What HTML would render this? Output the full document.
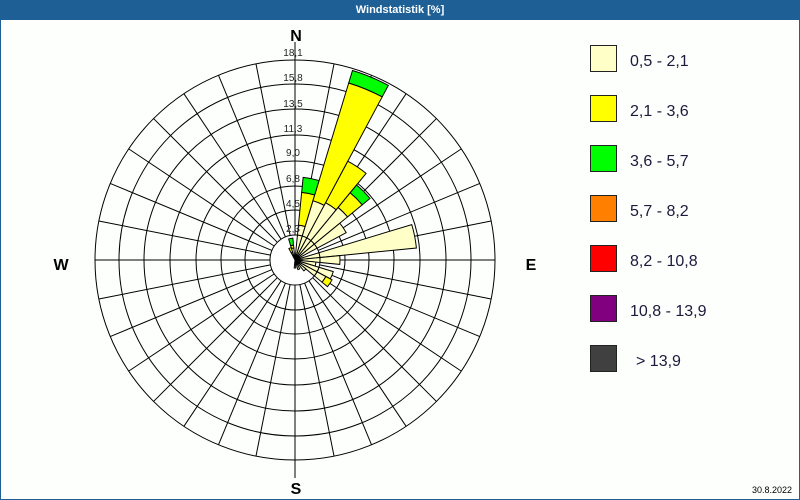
<!DOCTYPE html>
<html><head><meta charset="utf-8"><style>
html,body{margin:0;padding:0;background:#fff}
#t{position:absolute;left:0;top:0;width:800px;height:20px;background:#1e6096;color:#fff;font:bold 11px "Liberation Sans",sans-serif;text-align:center;line-height:20px;z-index:2}
svg{position:absolute;left:0;top:0}
</style></head><body>
<div id="t">Windstatistik [%]</div>
<svg width="800" height="500" viewBox="0 0 800 500" id="s">
<rect x="0.5" y="19.5" width="799" height="480" fill="#fdfffd" stroke="#1e6096"/>
<g id="grid" fill="none" stroke="#000" stroke-width="1"></g>
<g id="bars" stroke="#000" stroke-width="1"></g>
<circle cx="295" cy="260" r="25" fill="#fff" stroke="#000"/>
<g id="bars2" stroke="#000" stroke-width="1"></g>
<g font-family="Liberation Sans,sans-serif" font-size="10" fill="#222" text-anchor="middle">
<text x="293" y="56">18,1</text><text x="293" y="81">15,8</text><text x="293" y="107">13,5</text>
<text x="293" y="132">11,3</text><text x="293" y="156">9,0</text><text x="293" y="182">6,8</text>
<text x="293" y="207">4,5</text><text x="293" y="232">2,3</text>
</g>
<g font-family="Liberation Sans,sans-serif" font-size="16" font-weight="bold" fill="#000" text-anchor="middle">
<text x="296" y="41">N</text><text x="61" y="270">W</text><text x="531" y="270">E</text><text x="296" y="494">S</text>
</g>
<g stroke="#222" stroke-width="1">
<rect x="590.5" y="45.5" width="26" height="26" fill="#ffffc8"/>
<rect x="590.5" y="95.5" width="26" height="26" fill="#ffff00"/>
<rect x="590.5" y="145.5" width="26" height="26" fill="#00ff00"/>
<rect x="590.5" y="195.5" width="26" height="26" fill="#ff8000"/>
<rect x="590.5" y="245.5" width="26" height="26" fill="#ff0000"/>
<rect x="590.5" y="295.5" width="26" height="26" fill="#800080"/>
<rect x="590.5" y="345.5" width="26" height="26" fill="#404040"/>
</g>
<g font-family="Liberation Sans,sans-serif" font-size="16" fill="#1a1a3a">
<text x="630" y="66">0,5 - 2,1</text><text x="630" y="116">2,1 - 3,6</text>
<text x="630" y="166">3,6 - 5,7</text><text x="630" y="216">5,7 - 8,2</text>
<text x="630" y="266">8,2 - 10,8</text><text x="630" y="316">10,8 - 13,9</text>
<text x="636" y="366">&gt; 13,9</text>
</g>
<text x="792" y="493" font-family="Liberation Sans,sans-serif" font-size="9" text-anchor="end" fill="#000">30.8.2022</text>
</svg>
<script>
var cx=295,cy=260,NS="http://www.w3.org/2000/svg";
function el(p,t,a){var e=document.createElementNS(NS,t);for(var k in a)e.setAttribute(k,a[k]);p.appendChild(e);return e;}
function pt(r,a){var rad=a*Math.PI/180;return [cx+r*Math.sin(rad),cy-r*Math.cos(rad)];}
var g=document.getElementById('grid');
[50,74,99,125,151,176,200].forEach(function(r){el(g,'circle',{cx:cx,cy:cy,r:r});});
for(var i=0;i<32;i++){var a=i*11.25,p1=pt(25,a),p2=pt(200,a);el(g,'line',{x1:p1[0],y1:p1[1],x2:p2[0],y2:p2[1]});}
el(g,'line',{x1:cx,y1:42,x2:cx,y2:478});
el(g,'line',{x1:95,y1:cy,x2:495,y2:cy});
function wedge(par,a1,a2,r0,r1,col){
 var A=pt(r0,a1),B=pt(r1,a1),C=pt(r1,a2),D=pt(r0,a2);
 var d='M'+A+' L'+B+' A'+r1+' '+r1+' 0 0 1 '+C+' L'+D+(r0>0?' A'+r0+' '+r0+' 0 0 0 '+A:'')+'Z';
 el(par,'path',{d:d,fill:col});
}
var cols=['#ffffc8','#ffff00','#00ff00'];
// sector index k => center k*11.25
var bars=[[30,[8,13]],[31,[12,15,22]],[1,[35,68,83]],[2,[62,185,198]],[3,[65,112]],[4,[68,87,97]],[5,[58]],[7,[122]],[8,[45]],[9,[21]],[10,[40]],[11,[35,42]],[12,[14]],[14,[10]],[16,[8]]];
var b=document.getElementById('bars'),b2=document.getElementById('bars2');
bars.forEach(function(x){var c=x[0]*11.25,a1=c-5.625,a2=c+5.625,r0=0;x[1].forEach(function(r,i){wedge(b,a1,a2,r0,r,cols[i]);r0=r;});
 r0=0;x[1].forEach(function(r,i){if(r0<25)wedge(b2,a1,a2,r0,Math.min(r,25),cols[i]);r0=r;});});
</script>
</body></html>
